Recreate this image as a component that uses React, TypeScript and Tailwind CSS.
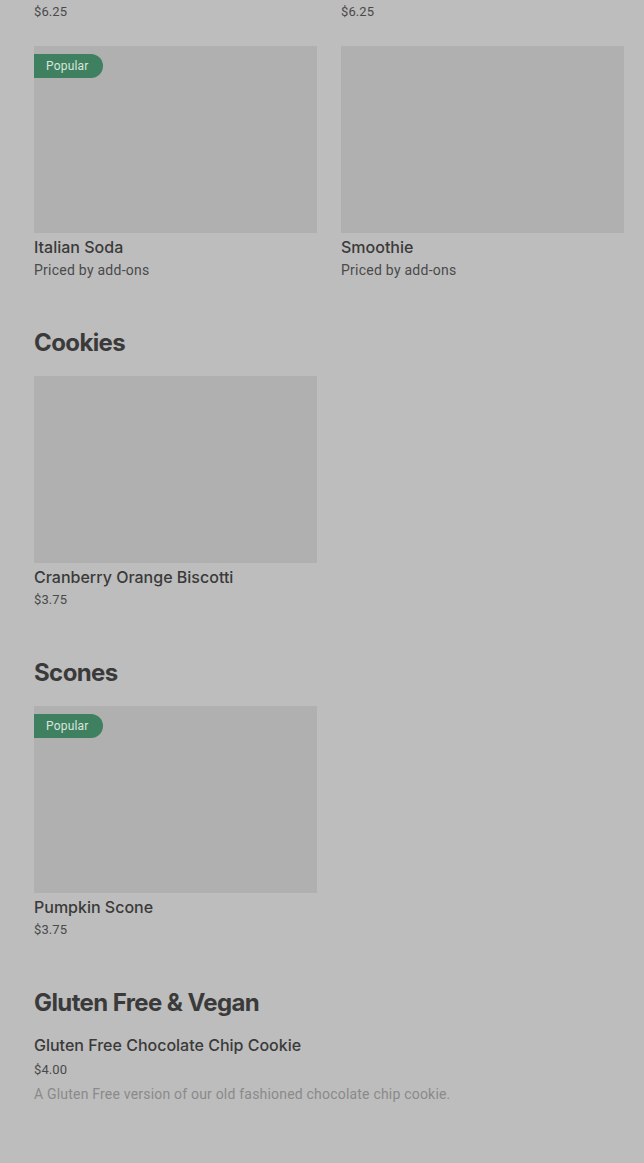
const items = {
  top: [
    { name: 'Italian Soda', price: 'Priced by add-ons', popular: true },
    { name: 'Smoothie', price: 'Priced by add-ons', popular: false },
  ],
}

function Badge() {
  return (
    <span className="absolute left-0 top-[8px] h-[24px] pl-[12px] pr-[14px] rounded-r-full bg-[#3f8060] text-[#d8e6de] text-[12px] leading-[24px] tracking-[0.2px]">
      Popular
    </span>
  )
}

function Card({ name, price, popular }: { name: string; price: string; popular?: boolean }) {
  const isMoney = price.startsWith('$')
  return (
    <div>
      <div className="relative h-[187px] bg-[#b0b0b0]">{popular && <Badge />}</div>
      <p className="mt-[4px] text-[16px] leading-[20px] font-medium text-[#3a3a3a]" style={{ fontFamily: 'Inter, sans-serif' }}>{name}</p>
      <p className={`mt-[3px] leading-[20px] text-[#4a4a4a] ${isMoney ? 'text-[13px] tracking-[0.1px]' : 'text-[14px] tracking-[0.25px]'}`}>{price}</p>
    </div>
  )
}

function Heading({ children }: { children: string }) {
  return (
    <h2 className="mt-[47px] text-[24px] leading-[32px] font-bold tracking-[-0.6px] text-[#3a3a3a]" style={{ fontFamily: 'Inter, sans-serif' }}>
      {children}
    </h2>
  )
}

export default function App() {
  return (
    <div className="min-h-[1163px] bg-[#bdbdbd] pl-[34px] pr-[20px]" style={{ fontFamily: 'Roboto, "Noto Sans", sans-serif' }}>
      <div className="grid grid-cols-2 gap-x-[24px]">
        <p className="text-[13px] leading-[24px] tracking-[0.1px] text-[#4a4a4a]">$6.25</p>
        <p className="text-[13px] leading-[24px] tracking-[0.1px] text-[#4a4a4a]">$6.25</p>
      </div>

      <div className="mt-[22px] grid grid-cols-2 gap-x-[24px]">
        {items.top.map(i => <Card key={i.name} {...i} />)}
      </div>

      <Heading>Cookies</Heading>
      <div className="mt-[17px] grid grid-cols-2 gap-x-[24px]">
        <Card name="Cranberry Orange Biscotti" price="$3.75" />
      </div>

      <Heading>Scones</Heading>
      <div className="mt-[17px] grid grid-cols-2 gap-x-[24px]">
        <Card name="Pumpkin Scone" price="$3.75" popular />
      </div>

      <Heading>Gluten Free &amp; Vegan</Heading>
      <div className="mt-[16px]">
        <p className="text-[16px] leading-[20px] font-medium text-[#3a3a3a]" style={{ fontFamily: 'Inter, sans-serif' }}>Gluten Free Chocolate Chip Cookie</p>
        <p className="mt-[5px] text-[13px] leading-[20px] tracking-[0.1px] text-[#4a4a4a]">$4.00</p>
        <p className="mt-[4px] text-[14px] leading-[20px] tracking-[0.2px] text-[#8a8a8a]">A Gluten Free version of our old fashioned chocolate chip cookie.</p>
      </div>
    </div>
  )
}
